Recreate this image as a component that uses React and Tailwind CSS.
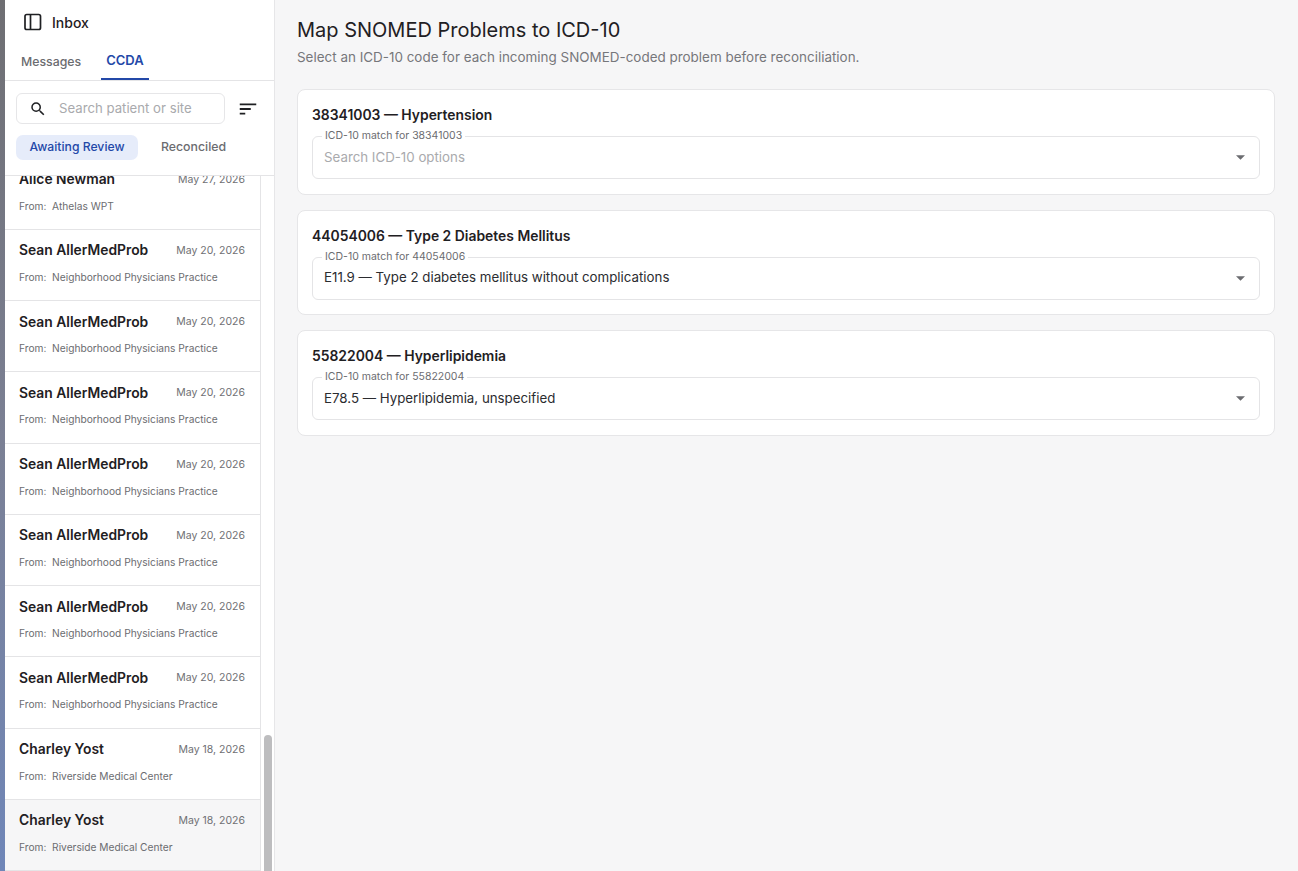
import React from "react";
import { MdSearch, MdSort } from "react-icons/md";

const rows = [
  { name: "Alice Newman", date: "May 27, 2026", from: "Athelas WPT" },
  ...Array(7).fill({ name: "Sean AllerMedProb", date: "May 20, 2026", from: "Neighborhood Physicians Practice" }),
  { name: "Charley Yost", date: "May 18, 2026", from: "Riverside Medical Center" },
  { name: "Charley Yost", date: "May 18, 2026", from: "Riverside Medical Center", active: true },
];

const problems = [
  { code: "38341003", title: "Hypertension", value: "", placeholder: "Search ICD-10 options" },
  { code: "44054006", title: "Type 2 Diabetes Mellitus", value: "E11.9 — Type 2 diabetes mellitus without complications" },
  { code: "55822004", title: "Hyperlipidemia", value: "E78.5 — Hyperlipidemia, unspecified" },
];

function PanelIcon() {
  return (
    <svg width="20" height="20" viewBox="0 0 20 20" fill="none" stroke="#1f2023" strokeWidth="1.7">
      <rect x="2" y="2.5" width="15.5" height="15" rx="1.8" />
      <path d="M7.5 2.5v15" />
    </svg>
  );
}

function Row({ row }) {
  return (
    <div className={`h-[71.25px] shrink-0 border-b border-[#e4e4e6] pl-[14px] pr-[15px] pt-[12px] ${row.active ? "bg-[#f6f6f7]" : "bg-white"}`}>
      <div className="flex items-center justify-between h-[18px]">
        <span className="text-[13.85px] font-semibold text-[#1f2023]">{row.name}</span>
        <span className="text-[10.5px] text-[#6f7074]">{row.date}</span>
      </div>
      <div className="mt-[9px] text-[10.2px] text-[#6b6c70] leading-[16px]">
        From:&nbsp; {row.from}
      </div>
    </div>
  );
}

function ProblemCard({ problem }) {
  return (
    <div className="bg-white border border-[#e6e6e8] rounded-[8px] px-[14px] pt-[15px] pb-[14.5px]">
      <div className="text-[13.9px] font-semibold text-[#1f2023] leading-[20px]">
        {problem.code} — {problem.title}
      </div>
      <div className="relative mt-[11px] h-[43px] border border-[#e4e4e6] rounded-[6px] flex items-center justify-between pl-[11px] pr-[14px]">
        <span className="absolute left-[9px] top-[-7px] bg-white px-[3px] text-[10.5px] leading-[12px] text-[#6b6c70]">
          ICD-10 match for {problem.code}
        </span>
        <span className={`text-[13.3px] ${problem.value ? "text-[#2b2c30]" : "text-[#a9aaad]"}`}>
          {problem.value || problem.placeholder}
        </span>
        <svg width="9" height="5" viewBox="0 0 10 5" className="fill-[#6b6c70]">
          <path d="M0 0h10L5 5z" />
        </svg>
      </div>
    </div>
  );
}

export default function App() {
  return (
    <div className="h-[871px] w-[1298px] overflow-hidden flex bg-[#f6f6f7] font-['Inter',sans-serif]">
      <div className="w-[5px] shrink-0 bg-gradient-to-b from-[#6e6e72] via-[#7b8094] to-[#6f86b8]" />
      <aside className="w-[270px] shrink-0 h-full flex flex-col bg-white border-r border-[#e6e6e8]">
        <div className="h-[176px] shrink-0 border-b border-[#e4e4e6] z-10 bg-white">
          <div className="h-[44px] flex items-center pl-[18px] gap-[9px]">
            <PanelIcon />
            <span className="text-[14px] font-medium text-[#1f2023]">Inbox</span>
          </div>
          <div className="h-[37px] flex items-center border-b border-[#e4e4e6] pl-[11px]">
            <div className="h-full flex items-center px-[5px] text-[12.3px] font-medium text-[#6b6c70]">Messages</div>
            <div className="ml-[15px] h-full flex items-center px-[5px] text-[13px] font-semibold text-[#2348a8] border-b-2 border-[#2348a8]">CCDA</div>
          </div>
          <div className="flex items-center pl-[11px] mt-[12px]">
            <div className="w-[209px] h-[31px] border border-[#e6e6e8] rounded-[6px] flex items-center pl-[12px]">
              <MdSearch size={18} className="text-[#1f2023]" />
              <span className="ml-[12px] text-[13.2px] text-[#a9aaad]">Search patient or site</span>
            </div>
            <MdSort size={22} className="ml-[12px] text-[#1f2023]" />
          </div>
          <div className="flex items-center pl-[11px] mt-[11px]">
            <div className="h-[25px] w-[122px] rounded-[7px] bg-[#e6ecfa] flex items-center justify-center text-[12.2px] font-medium text-[#2348a8]">Awaiting Review</div>
            <div className="ml-[23px] text-[12.3px] font-medium text-[#6b6c70]">Reconciled</div>
          </div>
        </div>
        <div className="flex-1 min-h-0 flex overflow-hidden">
          <div className="w-[256px] shrink-0 -mt-[17.5px] flex flex-col border-r border-[#e4e4e6]">
            {rows.map((row, i) => (
              <Row key={i} row={row} />
            ))}
          </div>
          <div className="flex-1 pl-[3px] pt-[559px]">
            <div className="w-[8px] h-[140px] rounded-full bg-[#bdbdbf]" />
          </div>
        </div>
      </aside>
      <main className="flex-1 min-w-0 pl-[22px] pr-[23px] pt-[17px]">
        <h1 className="text-[20px] leading-[26px] font-normal text-[#1f2023]">Map SNOMED Problems to ICD-10</h1>
        <p className="mt-[4px] text-[13.45px] leading-[20px] text-[#76777b]">
          Select an ICD-10 code for each incoming SNOMED-coded problem before reconciliation.
        </p>
        <div className="mt-[22px] flex flex-col gap-[15px]">
          {problems.map((p) => (
            <ProblemCard key={p.code} problem={p} />
          ))}
        </div>
      </main>
    </div>
  );
}
